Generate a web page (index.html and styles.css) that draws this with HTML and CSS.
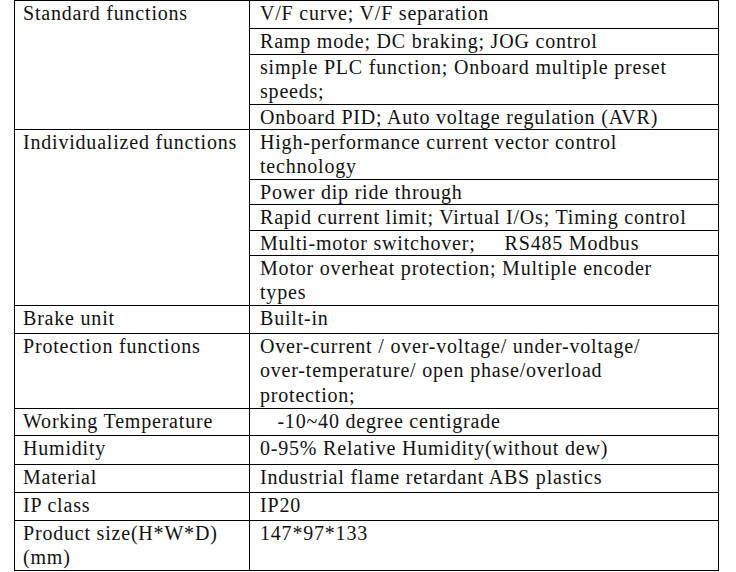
FILE: index.html
```html
<!DOCTYPE html>
<html>
<head>
<meta charset="utf-8">
<link rel="stylesheet" href="styles.css">
</head>
<body>
<table class="spec">
  <tr class="h28"><td class="label" rowspan="4">Standard functions</td><td>V/F curve; V/F separation</td></tr>
  <tr class="h26"><td>Ramp mode; DC braking; JOG control</td></tr>
  <tr class="h50"><td>simple PLC function; Onboard multiple preset<br>speeds;</td></tr>
  <tr class="h25"><td>Onboard PID; Auto voltage regulation (AVR)</td></tr>
  <tr class="h50"><td class="label" rowspan="5">Individualized functions</td><td>High-performance current vector control<br>technology</td></tr>
  <tr class="h25"><td>Power dip ride through</td></tr>
  <tr class="h26"><td>Rapid current limit; Virtual I/Os; Timing control</td></tr>
  <tr class="h25"><td>Multi-motor switchover;&nbsp;&nbsp;&nbsp;&nbsp; RS485 Modbus</td></tr>
  <tr class="h50"><td>Motor overheat protection; Multiple encoder<br>types</td></tr>
  <tr class="h28"><td class="label">Brake unit</td><td>Built-in</td></tr>
  <tr class="h75"><td class="label">Protection functions</td><td class="three">Over-current / over-voltage/ under-voltage/<br>over-temperature/ open phase/overload<br>protection;</td></tr>
  <tr class="h27"><td class="label">Working Temperature</td><td>&nbsp;&nbsp;&nbsp;-10~40 degree centigrade</td></tr>
  <tr class="h29"><td class="label">Humidity</td><td>0-95% Relative Humidity(without dew)</td></tr>
  <tr class="h28"><td class="label">Material</td><td>Industrial flame retardant ABS plastics</td></tr>
  <tr class="h28"><td class="label">IP class</td><td>IP20</td></tr>
  <tr class="h50"><td class="label">Product size(H*W*D)<br>(mm)</td><td>147*97*133</td></tr>
</table>
</body>
</html>
```
FILE: styles.css
```css
html, body {
  margin: 0;
  padding: 0;
  background: #fff;
}
.spec {
  margin-left: 14px;
  border-collapse: collapse;
  table-layout: fixed;
  width: 705px;
  font-family: "Liberation Serif", serif;
  font-size: 20px;
  letter-spacing: 0.8px;
  line-height: 24px;
  color: #111;
}
.spec td {
  border: 1px solid #000;
  vertical-align: top;
  padding: 0 4px 0 10px;
  white-space: nowrap;
}
.spec td.label {
  width: 222px;
  padding-left: 8px;
}
.spec td.three {
  line-height: 24.4px;
}
.h25 { height: 25px; }
.h26 { height: 26px; }
.h27 { height: 27px; }
.h28 { height: 28px; }
.h29 { height: 29px; }
.h50 { height: 50px; }
.h75 { height: 75px; }
```
